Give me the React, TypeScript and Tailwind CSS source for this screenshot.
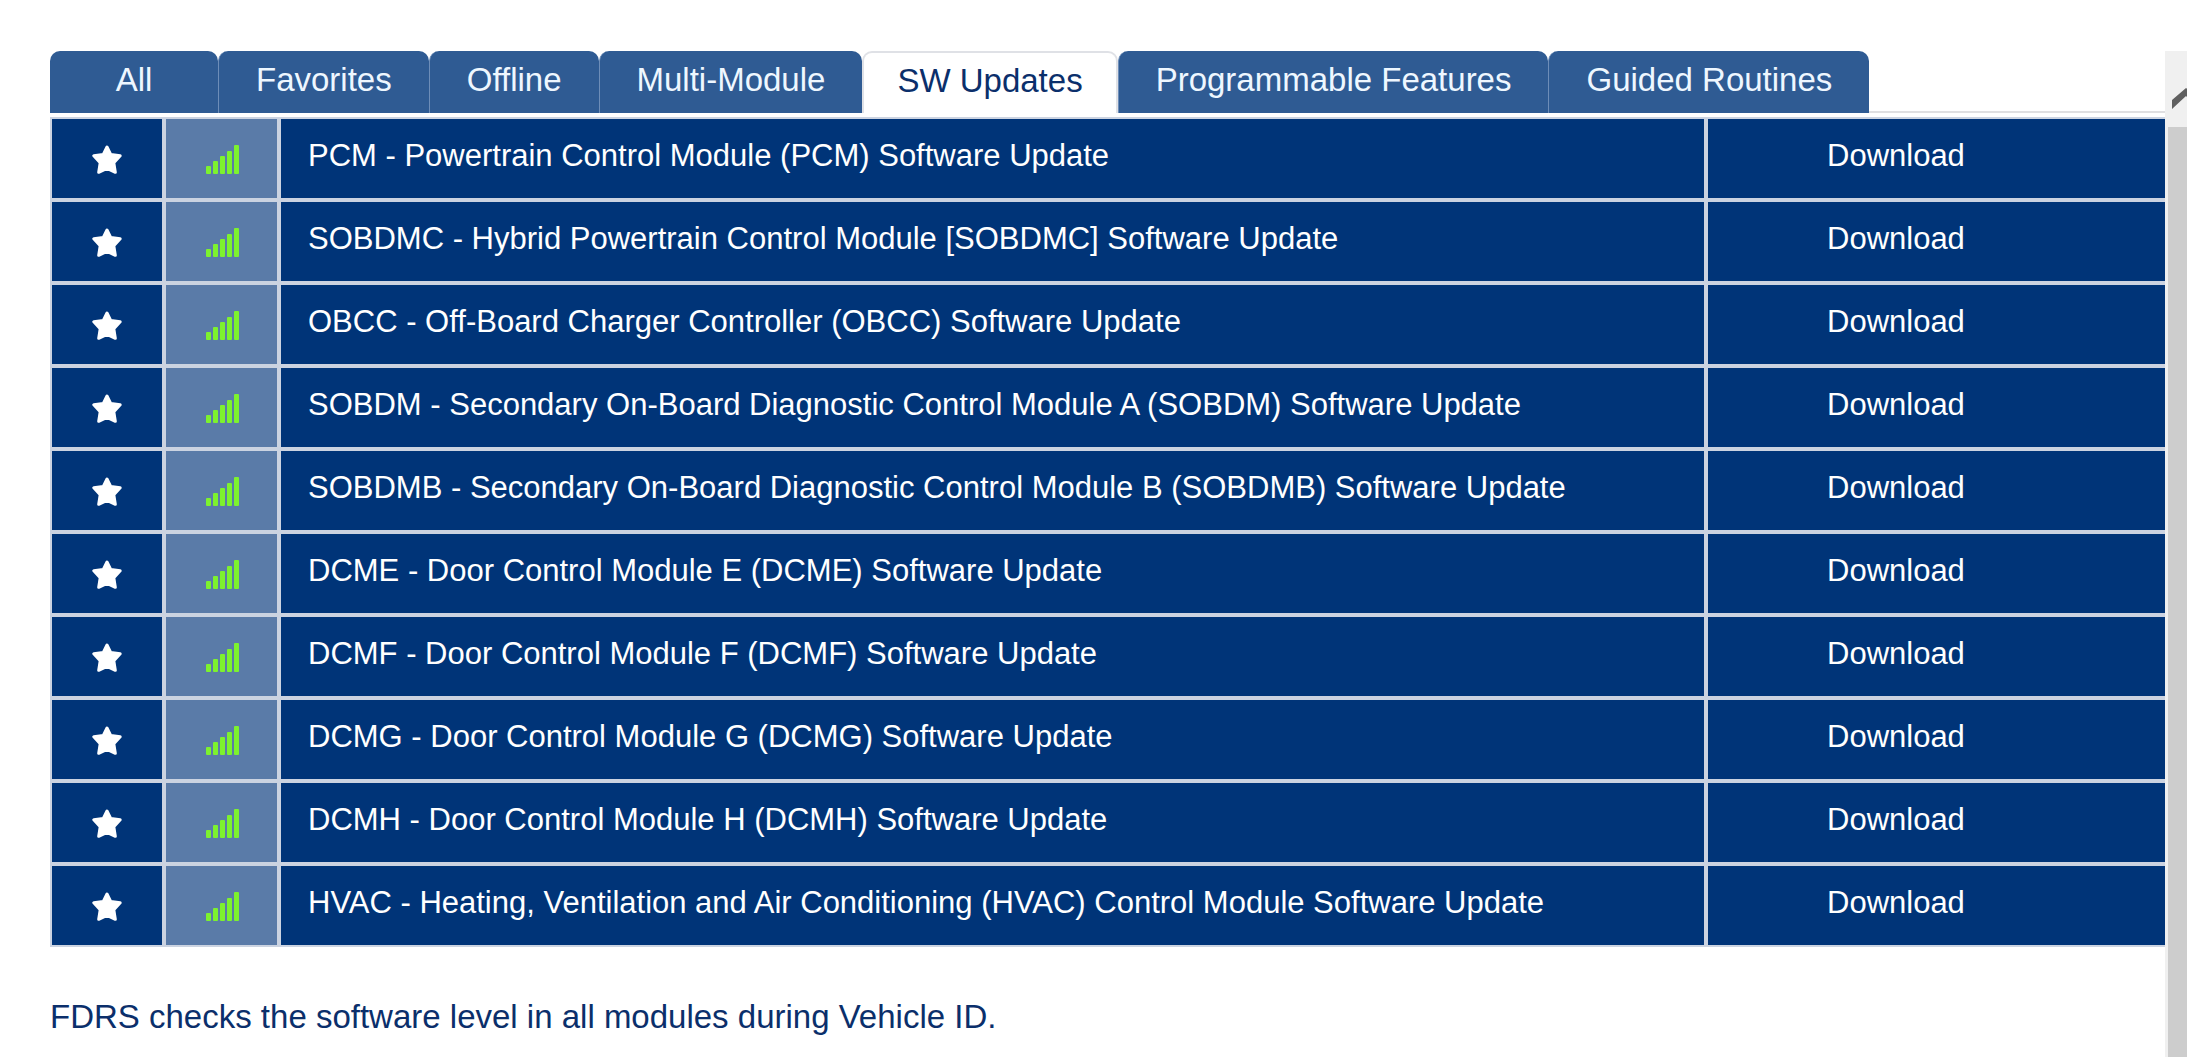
import { useState } from 'react';

const TABS = [
  'All',
  'Favorites',
  'Offline',
  'Multi-Module',
  'SW Updates',
  'Programmable Features',
  'Guided Routines',
];

const UPDATES = [
  'PCM - Powertrain Control Module (PCM) Software Update',
  'SOBDMC - Hybrid Powertrain Control Module [SOBDMC] Software Update',
  'OBCC - Off-Board Charger Controller (OBCC) Software Update',
  'SOBDM - Secondary On-Board Diagnostic Control Module A (SOBDM) Software Update',
  'SOBDMB - Secondary On-Board Diagnostic Control Module B (SOBDMB) Software Update',
  'DCME - Door Control Module E (DCME) Software Update',
  'DCMF - Door Control Module F (DCMF) Software Update',
  'DCMG - Door Control Module G (DCMG) Software Update',
  'DCMH - Door Control Module H (DCMH) Software Update',
  'HVAC - Heating, Ventilation and Air Conditioning (HVAC) Control Module Software Update',
];

function StarIcon() {
  return (
    <svg viewBox="0 0 30 30" className="h-[30px] w-[30px]" aria-hidden="true">
      <path
        d="M15 2 L18.8 9.6 L28.2 10.8 L21.8 17.8 L23.3 27.3 L15 23.4 L6.7 27.3 L8.2 17.8 L1.8 10.8 L11.2 9.6 Z"
        fill="white"
        stroke="white"
        strokeWidth="3"
        strokeLinejoin="round"
      />
    </svg>
  );
}

function SignalIcon() {
  return (
    <svg viewBox="0 0 34 30" className="h-[30px] w-[34px]" role="img" aria-label="Full signal">
      <g fill="#7df22e">
        <rect x="1" y="21" width="5" height="8" rx="1" />
        <rect x="8" y="16" width="5" height="13" rx="1" />
        <rect x="15" y="11" width="5" height="18" rx="1" />
        <rect x="22" y="6" width="5" height="23" rx="1" />
        <rect x="29" y="0" width="5" height="29" rx="1" />
      </g>
    </svg>
  );
}

function Tabs({ active, onSelect }: { active: string; onSelect: (tab: string) => void }) {
  return (
    <div role="tablist" className="flex h-[62px] border-b-2 border-[#dfdfe1]">
      {TABS.map((tab) => (
        <button
          key={tab}
          type="button"
          role="tab"
          aria-selected={tab === active}
          onClick={() => onSelect(tab)}
          className={
            tab === active
              ? 'h-[62px] shrink-0 rounded-t-[10px] border-x-2 border-t-2 border-[#dfe1e6] bg-white px-[33px] pb-1 text-[33px] leading-[38px] text-[#0b2f6b]'
              : 'h-[62px] min-w-[168px] shrink-0 rounded-t-[10px] border-l border-[#6d8db8] bg-[#2f5b93] px-[37px] pb-1 text-[33px] leading-[38px] text-[#eef7ff] first:border-l-0'
          }
        >
          {tab}
        </button>
      ))}
    </div>
  );
}

function UpdateTable() {
  return (
    <table className="mt-1 w-full table-fixed border-separate border-spacing-0 text-[31px] leading-[36px] text-white">
      <colgroup>
        <col className="w-[114px]" />
        <col className="w-[115px]" />
        <col />
        <col className="w-[459px]" />
      </colgroup>
      <tbody>
        {UPDATES.map((name) => (
          <tr key={name} className="h-[83px]">
            <td className="border-2 border-[#cbd3e1] bg-[#003478] p-0">
              <button type="button" aria-label="Favorite" className="flex w-full justify-center pt-[2px]">
                <StarIcon />
              </button>
            </td>
            <td className="border-2 border-[#cbd3e1] bg-[#5a7ba8] p-0">
              <div className="flex justify-center pt-[2px]">
                <SignalIcon />
              </div>
            </td>
            <td className="border-2 border-[#cbd3e1] bg-[#003478] pt-0 pr-0 pb-[5px] pl-[27px] whitespace-nowrap">{name}</td>
            <td className="border-y-2 border-l-2 border-[#cbd3e1] bg-[#003478] pt-0 pr-0 pb-[5px] pl-[119px]">
              <button type="button" className="block">Download</button>
            </td>
          </tr>
        ))}
      </tbody>
    </table>
  );
}

function ScrollRail() {
  return (
    <div className="flex w-[22px] shrink-0 flex-col overflow-hidden bg-[#f0f0f0]">
      <button type="button" aria-label="Scroll up" className="flex h-[76px] shrink-0 items-center pt-5 pl-[7px]">
        <svg viewBox="0 0 28 22" className="h-[22px] w-[28px] shrink-0" aria-hidden="true">
          <path d="M0 12 L14 0 L28 12 V21 L14 8 L0 21 Z" fill="#606060" />
        </svg>
      </button>
      <div className="ml-[3px] flex-1 bg-[#cdcdcd]" />
    </div>
  );
}

export default function App() {
  const [active, setActive] = useState('SW Updates');

  return (
    <div className="flex min-h-screen bg-white pt-[51px] font-['Liberation_Sans',Arial,sans-serif]">
      <main className="min-w-0 flex-1 pl-[50px]">
        <Tabs active={active} onSelect={setActive} />
        <UpdateTable />
        <p className="mt-[50px] text-[33px] leading-[40px] text-[#0b2f6b]">
          FDRS checks the software level in all modules during Vehicle ID.
        </p>
      </main>
      <ScrollRail />
    </div>
  );
}
